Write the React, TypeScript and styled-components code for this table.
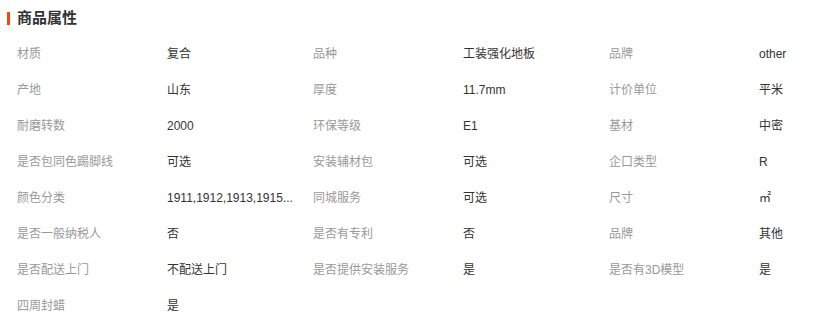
import styled, { createGlobalStyle } from "styled-components";

const GlobalStyle = createGlobalStyle`
  html, body {
    margin: 0;
    padding: 0;
    background: #fff;
  }
  body {
    font-family: "Liberation Sans", "Noto Sans CJK SC", sans-serif;
    font-size: 12px;
    line-height: 16px;
  }
`;

const Wrapper = styled.section`
  width: 820px;
  padding-top: 2px;
  overflow: hidden;
`;

const Heading = styled.h2`
  display: flex;
  align-items: center;
  gap: 7px;
  height: 34px;
  margin: 0;
  padding: 0 0 2px 7px;
  box-sizing: border-box;
  font-size: 15px;
  line-height: 20px;
  font-weight: bold;
  color: #333;

  &::before {
    content: "";
    width: 3px;
    height: 13px;
    background: #ff4400;
  }
`;

const AttrGrid = styled.dl`
  display: grid;
  grid-template-columns: 150px 146px 150px 146px 150px 146px;
  grid-auto-rows: 36px;
  margin: 0;
  padding-left: 17px;
`;

const Label = styled.dt`
  display: flex;
  align-items: center;
  color: #999;
  white-space: nowrap;
`;

const Value = styled.dd`
  display: flex;
  align-items: center;
  margin: 0;
  color: #333;
  white-space: nowrap;
`;

// 颜色分类 is shown shortened, as on the product page
const attrs: [string, string][] = [
  ["材质", "复合"],
  ["品种", "工装强化地板"],
  ["品牌", "other"],
  ["产地", "山东"],
  ["厚度", "11.7mm"],
  ["计价单位", "平米"],
  ["耐磨转数", "2000"],
  ["环保等级", "E1"],
  ["基材", "中密"],
  ["是否包同色踢脚线", "可选"],
  ["安装辅材包", "可选"],
  ["企口类型", "R"],
  ["颜色分类", "1911,1912,1913,1915..."],
  ["同城服务", "可选"],
  ["尺寸", "㎡"],
  ["是否一般纳税人", "否"],
  ["是否有专利", "否"],
  ["品牌", "其他"],
  ["是否配送上门", "不配送上门"],
  ["是否提供安装服务", "是"],
  ["是否有3D模型", "是"],
  ["四周封蜡", "是"],
];

const App = () => {
  return (
    <Wrapper>
      <GlobalStyle />
      <Heading>商品属性</Heading>
      <AttrGrid>
        {attrs.map(([name, value], i) => [
          <Label key={`l${i}`}>{name}</Label>,
          <Value key={`v${i}`}>{value}</Value>,
        ])}
      </AttrGrid>
    </Wrapper>
  );
};

export default App;
